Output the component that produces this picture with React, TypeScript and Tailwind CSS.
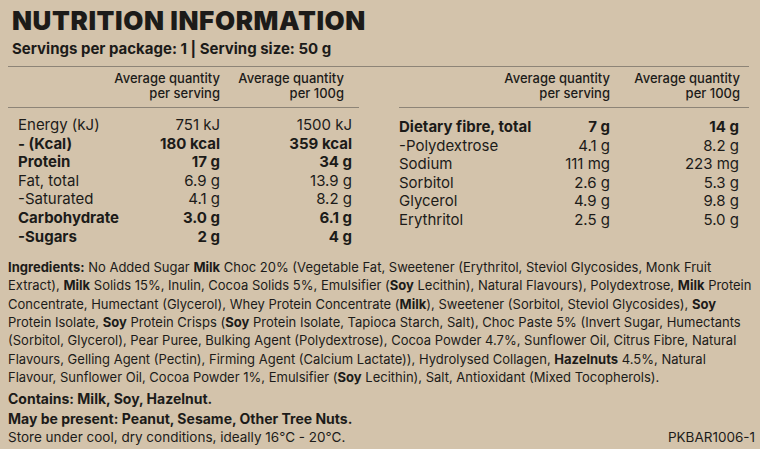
import React from "react";

type Row = { label: string; a: string; b: string; bold?: boolean };

const left: Row[] = [
  { label: "Energy (kJ)", a: "751 kJ", b: "1500 kJ" },
  { label: "- (Kcal)", a: "180 kcal", b: "359 kcal", bold: true },
  { label: "Protein", a: "17 g", b: "34 g", bold: true },
  { label: "Fat, total", a: "6.9 g", b: "13.9 g" },
  { label: "-Saturated", a: "4.1 g", b: "8.2 g" },
  { label: "Carbohydrate", a: "3.0 g", b: "6.1 g", bold: true },
  { label: "-Sugars", a: "2 g", b: "4 g", bold: true },
];

const right: Row[] = [
  { label: "Dietary fibre, total", a: "7 g", b: "14 g", bold: true },
  { label: "-Polydextrose", a: "4.1 g", b: "8.2 g" },
  { label: "Sodium", a: "111 mg", b: "223 mg" },
  { label: "Sorbitol", a: "2.6 g", b: "5.3 g" },
  { label: "Glycerol", a: "4.9 g", b: "9.8 g" },
  { label: "Erythritol", a: "2.5 g", b: "5.0 g" },
];

const B = ({ children }: { children: React.ReactNode }) => <span className="font-bold">{children}</span>;

const Header = ({ w2, pr2 }: { w2: string; pr2: string }) => (
  <div className="flex justify-end text-[13px] leading-[15px] font-medium pt-[4px] pb-[6px]">
    <div className="text-right">
      Average quantity
      <br />
      per serving
    </div>
    <div className={`${w2} ${pr2} text-right`}>
      Average quantity
      <br />
      per 100g
    </div>
  </div>
);

const App = () => {
  return (
    <div
      className="w-[760px] h-[449px] bg-[#d3c3ab] text-[#1c1b19] px-2 overflow-hidden"
      style={{ fontFamily: "Inter, 'Noto Sans', sans-serif" }}
    >
      <h1 className="pt-[6px] pl-[4px] text-[26px] leading-[30px] font-black tracking-[0.6px]">NUTRITION INFORMATION</h1>
      <p className="mt-[4px] pl-[4px] text-[15px] leading-[18px] font-bold">Servings per package: 1 | Serving size: 50 g</p>

      <div className="mt-[8px] border-t border-[#8d8477] flex w-[741px]">
        {/* left table */}
        <div className="w-[351px]">
          <Header w2="w-[139px]" pr2="pr-[15px]" />
          <div className="border-t border-[#8d8477] pt-[8px]">
            {left.map((r) => (
              <div key={r.label} className={`flex text-[15px] leading-[18.6px] ${r.bold ? "font-bold" : "font-normal"}`}>
                <div className="w-[102px] pl-[10px] whitespace-nowrap">{r.label}</div>
                <div className="w-[110px] text-right">{r.a}</div>
                <div className="w-[132px] text-right">{r.b}</div>
              </div>
            ))}
          </div>
        </div>
        <div className="w-[40px]" />
        {/* right table */}
        <div className="w-[350px]">
          <Header w2="w-[139px]" pr2="pr-[9px]" />
          <div className="border-t border-[#8d8477] pt-[10px]">
            {right.map((r) => (
              <div key={r.label} className={`flex text-[15px] leading-[18.5px] ${r.bold ? "font-bold" : "font-normal"}`}>
                <div className="w-[141px] whitespace-nowrap">{r.label}</div>
                <div className="w-[70px] text-right">{r.a}</div>
                <div className="w-[129px] text-right">{r.b}</div>
              </div>
            ))}
          </div>
        </div>
      </div>

      <div className="mt-[12px] text-[13px] leading-[18.3px] whitespace-nowrap">
        <div>
          <B>Ingredients:</B> No Added Sugar <B>Milk</B> Choc 20% (Vegetable Fat, Sweetener (Erythritol, Steviol Glycosides, Monk Fruit
        </div>
        <div>
          Extract), <B>Milk</B> Solids 15%, Inulin, Cocoa Solids 5%, Emulsifier (<B>Soy</B> Lecithin), Natural Flavours), Polydextrose, <B>Milk</B> Protein
        </div>
        <div>
          Concentrate, Humectant (Glycerol), Whey Protein Concentrate (<B>Milk</B>), Sweetener (Sorbitol, Steviol Glycosides), <B>Soy</B>
        </div>
        <div>
          Protein Isolate, <B>Soy</B> Protein Crisps (<B>Soy</B> Protein Isolate, Tapioca Starch, Salt), Choc Paste 5% (Invert Sugar, Humectants
        </div>
        <div>(Sorbitol, Glycerol), Pear Puree, Bulking Agent (Polydextrose), Cocoa Powder 4.7%, Sunflower Oil, Citrus Fibre, Natural</div>
        <div>
          Flavours, Gelling Agent (Pectin), Firming Agent (Calcium Lactate)), Hydrolysed Collagen, <B>Hazelnuts</B> 4.5%, Natural
        </div>
        <div>
          Flavour, Sunflower Oil, Cocoa Powder 1%, Emulsifier (<B>Soy</B> Lecithin), Salt, Antioxidant (Mixed Tocopherols).
        </div>
      </div>

      <div className="mt-[3px] text-[14px] leading-[19.5px]">
        <div className="font-bold">Contains: Milk, Soy, Hazelnut.</div>
        <div className="font-bold">May be present: Peanut, Sesame, Other Tree Nuts.</div>
        <div className="flex justify-between text-[13.5px] leading-[18px]">
          <span>Store under cool, dry conditions, ideally 16°C - 20°C.</span>
          <span className="mr-[-3px]">PKBAR1006-1</span>
        </div>
      </div>
    </div>
  );
};

export default App;
